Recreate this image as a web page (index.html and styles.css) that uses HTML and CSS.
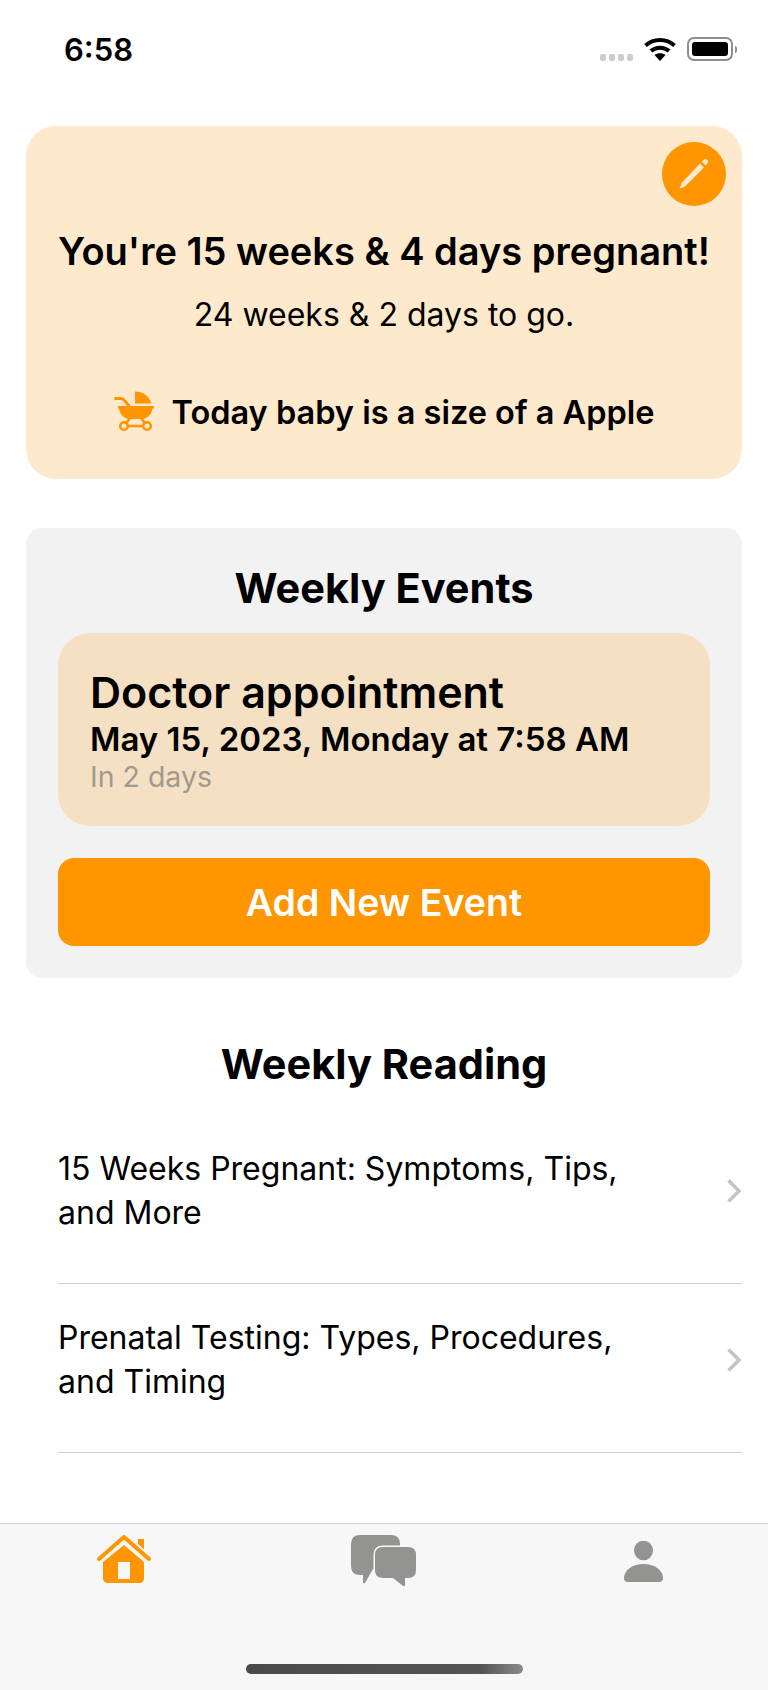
FILE: index.html
```html
<!DOCTYPE html>
<html lang="en">
<head>
    <meta charset="UTF-8">
    <meta name="viewport" content="width=device-width, initial-scale=1.0">
    <title>Pregnancy Home</title>
    <link rel="stylesheet" href="styles.css">
</head>
<body>
<div class="screen">

    <!-- Status bar -->
    <div class="status-bar">
        <span class="time">6:58</span>
        <div class="status-icons">
            <div class="signal"><i></i><i></i><i></i><i></i></div>
            <svg class="wifi" width="32" height="24" viewBox="0 0 32 24">
                <path d="M1.500 8.500C9.500 1 22.500 1 30.500 8.500" fill="none" stroke="#000" stroke-width="4"/>
                <path d="M7 14C12 9.500 20 9.500 25 14" fill="none" stroke="#000" stroke-width="4"/>
                <path d="M16 24L10.500 18C13.500 15.500 18.500 15.500 21.500 18Z" fill="#000"/>
            </svg>
            <div class="battery"><div class="battery-level"></div></div>
            <div class="battery-cap"></div>
        </div>
    </div>

    <div class="main">
        <!-- Summary card -->
        <div class="summary-card">
            <button class="edit-btn" type="button">
                <svg width="34" height="34" viewBox="0 0 34 34">
                    <path d="M2.500 31.500L5 25.500L23 6.500L27 10.500L8.500 29Q5.500 31 2.500 31.500Z" fill="#fee9cc"/>
                    <path d="M25 4.500L27 2.500Q28.500 1.500 30 2.800L30.500 3.300Q31.800 4.800 30.500 6.300L28.500 8.500Z" fill="#fee9cc"/>
                </svg>
            </button>
            <h1>You're 15 weeks &amp; 4 days pregnant!</h1>
            <p class="to-go">24 weeks &amp; 2 days to go.</p>
            <div class="baby-size">
                <svg class="pram" width="41" height="41" viewBox="0 0 41 41">
                    <path d="M22 0.500C30 0.500 36 5 38.500 12.500H22Z" fill="#ff9500"/>
                    <path d="M5 15H41V17.500H39.500C38.500 23.500 34.500 28 28 28H17C11 28 7 23.500 6 17.500H5Z" fill="#ff9500"/>
                    <path d="M2.500 7.500H8C10 7.500 11 8.500 12 10L16 15" fill="none" stroke="#ff9500" stroke-width="3" stroke-linecap="round"/>
                    <path d="M17 27L12.500 33M28 27L32.500 33M14 35H31" fill="none" stroke="#ff9500" stroke-width="2.500"/>
                    <circle cx="11" cy="35" r="3.800" fill="none" stroke="#ff9500" stroke-width="2.500"/>
                    <circle cx="34" cy="35" r="3.800" fill="none" stroke="#ff9500" stroke-width="2.500"/>
                </svg>
                <span>Today baby is a size of a Apple</span>
            </div>
        </div>

        <!-- Weekly events -->
        <div class="events-card">
            <h2>Weekly Events</h2>
            <div class="event">
                <div class="event-title">Doctor appointment</div>
                <div class="event-date">May 15, 2023, Monday at 7:58 AM</div>
                <div class="event-when">In 2 days</div>
            </div>
            <button class="add-btn" type="button">Add New Event</button>
        </div>

        <!-- Weekly reading -->
        <div class="reading">
            <h2>Weekly Reading</h2>
            <a class="reading-row" href="#">
                <span>15 Weeks Pregnant: Symptoms, Tips, and More</span>
                <svg width="16" height="26" viewBox="0 0 16 26"><path d="M2.500 2.500L13 13L2.500 23.500" fill="none" stroke="#c4c4c6" stroke-width="3.500"/></svg>
            </a>
            <a class="reading-row" href="#">
                <span>Prenatal Testing: Types, Procedures, and Timing</span>
                <svg width="16" height="26" viewBox="0 0 16 26"><path d="M2.500 2.500L13 13L2.500 23.500" fill="none" stroke="#c4c4c6" stroke-width="3.500"/></svg>
            </a>
        </div>
    </div>

    <!-- Tab bar -->
    <div class="tab-bar">
        <div class="tabs">
            <svg class="tab-home" width="54" height="48" viewBox="0 0 54 48">
                <path d="M41 4H47V18H41Z" fill="#ff9500"/>
                <path d="M2 24L27 2L52 24" fill="none" stroke="#f7f7f7" stroke-width="8" stroke-linecap="round" stroke-linejoin="round"/>
                <path d="M2 24L27 2L52 24" fill="none" stroke="#ff9500" stroke-width="4" stroke-linecap="round" stroke-linejoin="round"/>
                <path d="M27 10L47 27V43Q47 48 42 48H11Q6 48 6 43V27Z" fill="#ff9500"/>
                <path d="M21 27H33V44H21Z" fill="#f7f7f7"/>
            </svg>
            <svg class="tab-chat" width="65" height="52" viewBox="0 0 65 52">
                <path d="M9 0H40Q49 0 49 9V34H22L14 48Q12 49 12 47V40H9Q0 40 0 31V9Q0 0 9 0Z" fill="#939492"/>
                <path d="M32 12H57Q65 12 65 20V35Q65 43 57 43H54V50Q54 52 52 51L42 43H32Q24 43 24 35V20Q24 12 32 12Z" fill="#939492" stroke="#f7f7f7" stroke-width="3" paint-order="stroke"/>
            </svg>
            <svg class="tab-profile" width="39" height="41" viewBox="0 0 39 41">
                <ellipse cx="19.500" cy="9.500" rx="9.500" ry="9.800" fill="#939492"/>
                <path d="M0 37C0 29 9 23 19.500 23S39 29 39 37Q39 41 35 41H4Q0 41 0 37Z" fill="#939492"/>
            </svg>
        </div>
        <div class="home-indicator"></div>
    </div>
</div>
</body>
</html>
```

FILE: styles.css
```css
* {
    box-sizing: border-box;
}
body {
    font-family: Inter, "Noto Sans", sans-serif;
    margin: 0;
    background-color: white;
    color: black;
}
h1, h2, p {
    margin: 0;
}
.screen {
    height: 1690px;
    display: flex;
    flex-direction: column;
}

/* Status bar */
.status-bar {
    height: 126px;
    padding: 32px 31px 0 64px;
    display: flex;
    justify-content: space-between;
    align-items: flex-start;
}
.time {
    font-size: 31px;
    font-weight: 600;
    line-height: 36px;
}
.status-icons {
    display: flex;
    align-items: center;
    margin-top: 5px;
}
.signal {
    display: flex;
    gap: 3px;
    margin: 17px 11px 0 0;
}
.signal i {
    width: 6px;
    height: 7px;
    border-radius: 2px;
    background-color: #cccccc;
}
.wifi {
    margin-right: 11px;
}
.battery {
    width: 46px;
    height: 24px;
    padding: 3px;
    border: 2px solid #8e8e8e;
    border-radius: 7px;
}
.battery-level {
    height: 100%;
    background-color: black;
    border-radius: 3px;
}
.battery-cap {
    width: 2px;
    height: 7px;
    margin-left: 2px;
    background-color: #8e8e8e;
    border-radius: 0 2px 2px 0;
}

/* Main content */
.main {
    flex: 1;
    padding: 0 26px;
}
.summary-card {
    position: relative;
    height: 353px;
    padding-top: 103px;
    background-color: #fee9cc;
    border-radius: 30px;
    text-align: center;
}
.summary-card h1 {
    font-size: 38px;
    font-weight: 600;
    line-height: 44px;
}
.to-go {
    margin-top: 22px;
    font-size: 32px;
    line-height: 40px;
}
.baby-size {
    margin-top: 57px;
    display: flex;
    justify-content: center;
    align-items: center;
    gap: 17px;
    font-size: 32.500px;
    font-weight: 600;
    line-height: 41px;
}
.pram {
    margin-top: -2px;
}
.edit-btn {
    position: absolute;
    top: 16px;
    right: 16px;
    width: 64px;
    height: 64px;
    padding: 0;
    border: none;
    border-radius: 50%;
    background-color: #ff9500;
    display: flex;
    align-items: center;
    justify-content: center;
}
.events-card {
    margin-top: 49px;
    height: 450px;
    padding: 36px 32px 32px;
    background-color: #f2f2f2;
    border-radius: 16px;
}
h2 {
    font-size: 41.500px;
    font-weight: 700;
    line-height: 48px;
    text-align: center;
}
.event {
    margin-top: 21px;
    height: 193px;
    padding: 36px 32px 0;
    background-color: #f5e0c3;
    border-radius: 32px;
}
.event-title {
    font-size: 43px;
    font-weight: 600;
    line-height: 47px;
}
.event-date {
    margin-top: 3px;
    font-size: 33px;
    font-weight: 600;
    line-height: 40px;
}
.event-when {
    font-size: 28.500px;
    line-height: 36px;
    color: #a09a90;
}
.add-btn {
    display: block;
    width: 100%;
    height: 88px;
    margin-top: 32px;
    border: none;
    border-radius: 16px;
    background-color: #ff9500;
    color: white;
    font-family: inherit;
    font-size: 37.500px;
    font-weight: 600;
}
.reading {
    margin-top: 61px;
}
.reading h2 {
    padding-top: 1px;
}
.reading-row {
    height: 169px;
    margin-left: 32px;
    padding-bottom: 16px;
    display: flex;
    align-items: center;
    justify-content: space-between;
    border-bottom: 1px solid #cfcfcf;
    color: black;
    text-decoration: none;
    font-size: 32px;
    line-height: 44px;
}
.reading h2 + .reading-row {
    margin-top: 27px;
}
.reading-row span {
    width: 570px;
}

/* Tab bar */
.tab-bar {
    height: 167px;
    background-color: #f7f7f7;
    border-top: 1px solid #cfcfcf;
    padding-top: 11px;
}
.tabs {
    height: 120px;
    display: flex;
    padding-left: 97px;
}
.tab-chat {
    margin-left: 200px;
}
.tab-profile {
    margin: 6px 0 0 208px;
}
.home-indicator {
    width: 277px;
    height: 10px;
    margin: 9px 0 0 246px;
    border-radius: 5px;
    background: linear-gradient(90deg, #4a4a4a 0%, #555555 85%, #8a8a8a 100%);
}
```
